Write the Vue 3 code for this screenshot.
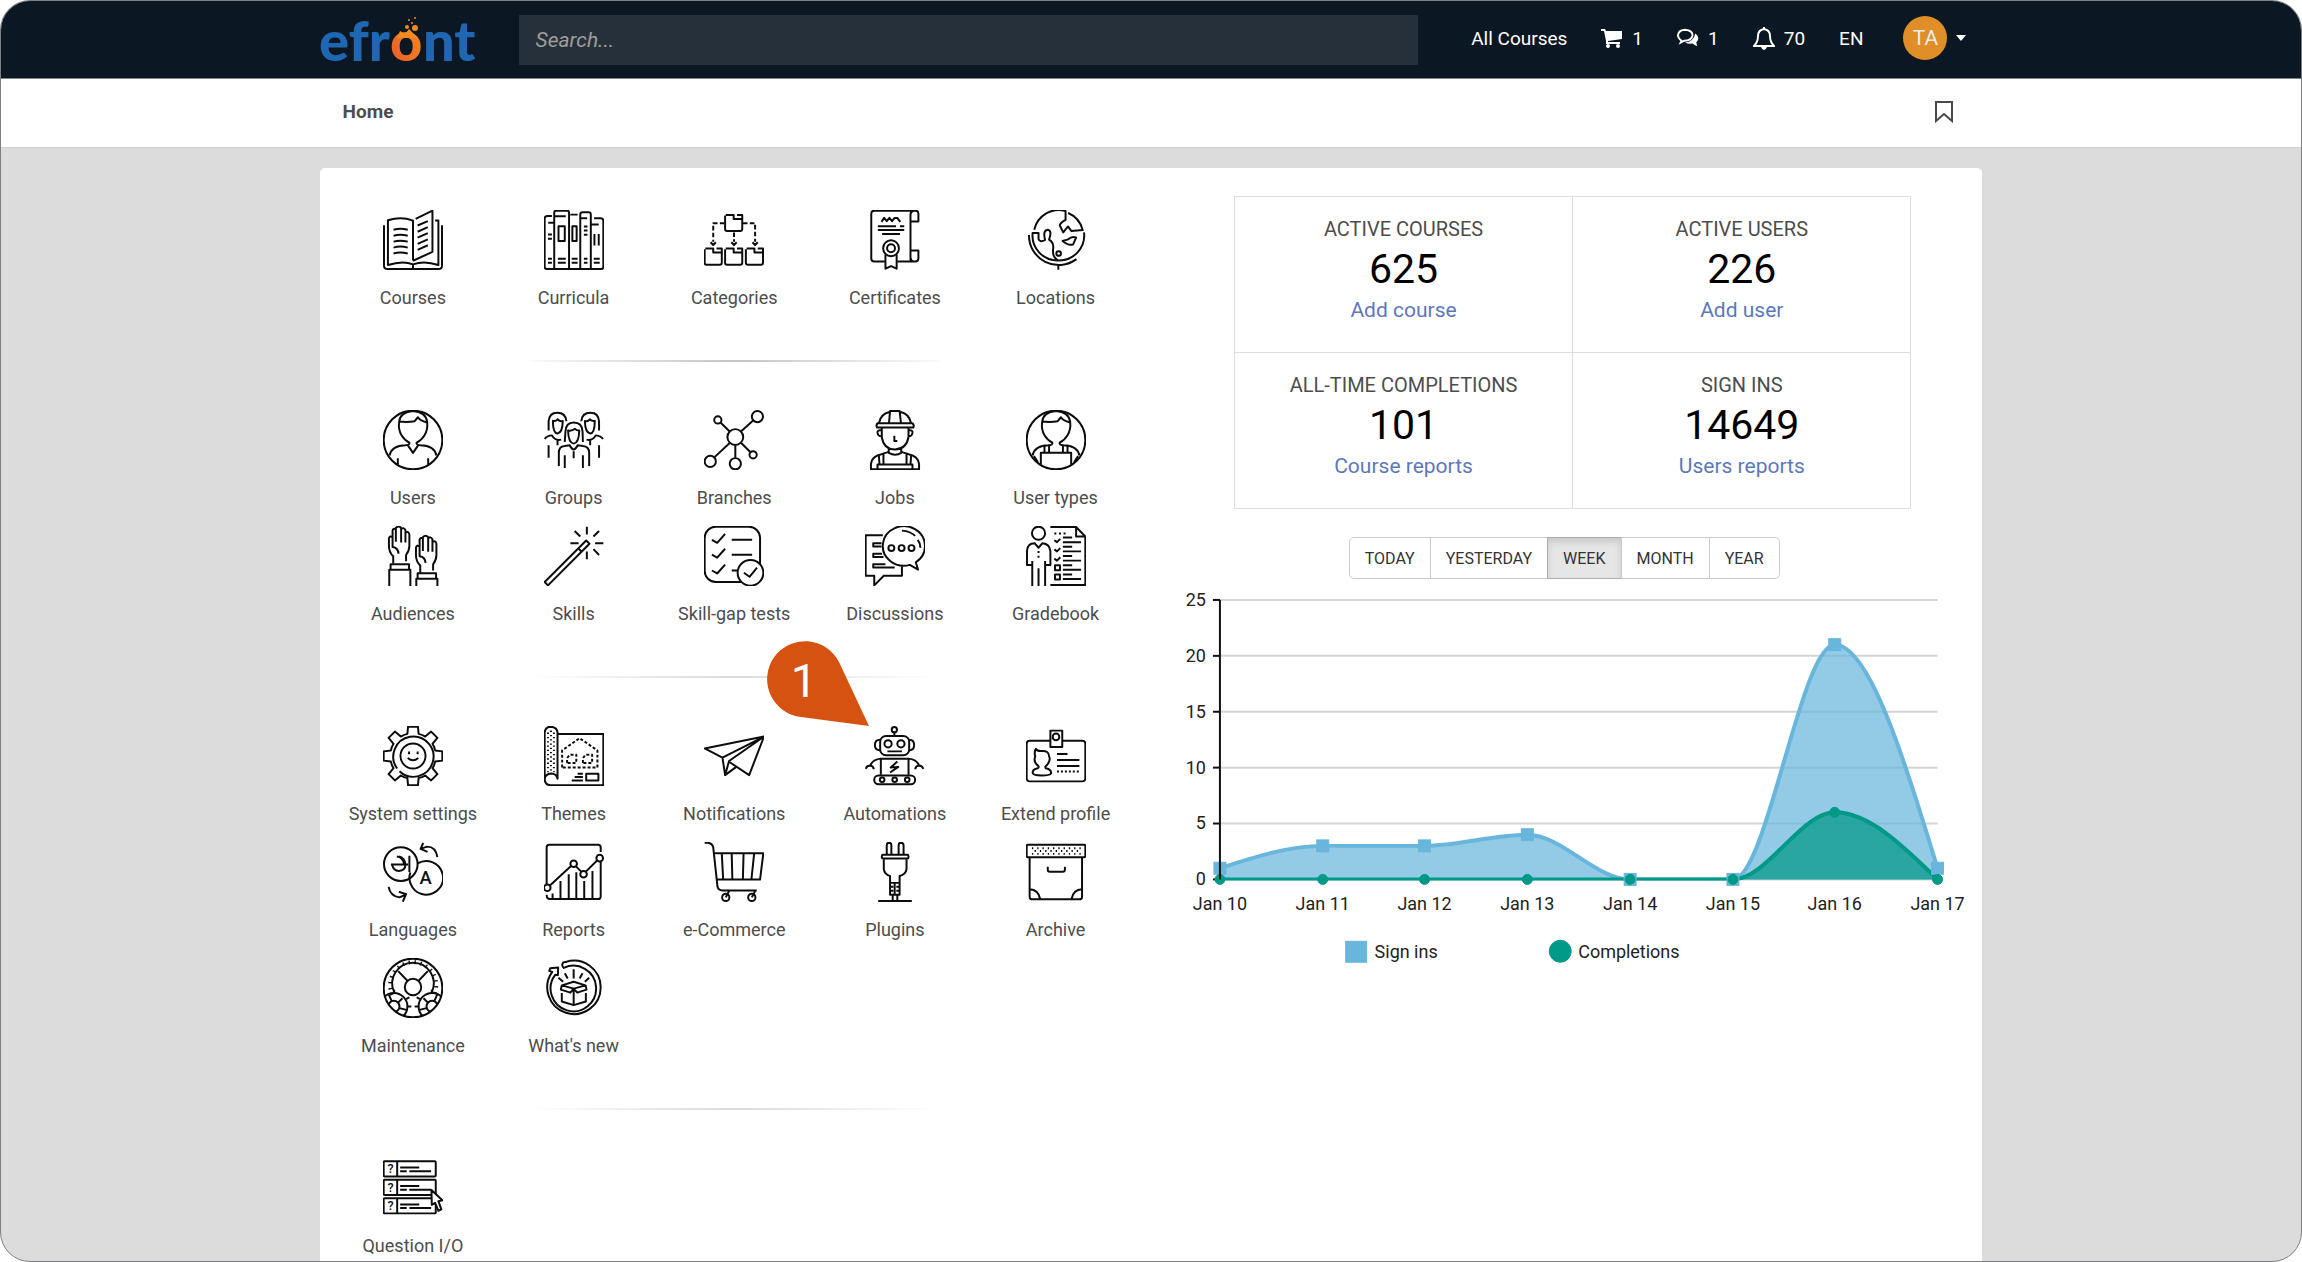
<template>
  <div class="page">
    <!-- Icon sprite -->
    <svg class="sprite" aria-hidden="true">
      <symbol id="courses" viewBox="0 0 182 182">
        <path d="M91 153V32Q55 18 15 31V167Q60 152 91 165Q125 152 168 167V32H158M3 46V168Q3 179 14 179H168Q179 179 179 168V46M91 165V179" />
        <path d="M99 27L150 2V127L91 154" />
        <path d="M32 60q20-6 43 0M32 78q20-6 43 0M32 96q20-6 43 0M32 114q20-6 43 0M32 132q20-6 43 0M105 47l31-13M105 66l31-14M105 84l31-14M105 103l31-14M105 121l31-14" />
      </symbol>
      <symbol id="curricula" viewBox="0 0 182 182">
        <path d="M24 18H10Q2 18 2 26V172Q2 179 9 179H173Q180 179 180 172V33Q180 25 172 25H152M31 179V8Q31 2 37 2H70Q76 2 76 8V179M80 14H102M110 179V14Q110 7 117 7H135Q142 7 142 14V179M13 39H30M34 19H66M112 25H131M144 44H166" />
        <rect x="44" y="49" width="19" height="45" /><rect x="86" y="49" width="13" height="45" />
        <path d="M153 73V108M166 73V108M12 74H24M12 87H24M121 50H132M121 62H132M121 75H132M12 148H24M12 160H24M42 148H66M42 160H66M84 148H102M84 160H102M121 148H132M121 160H132M151 148H169M151 160H169" />
      </symbol>
      <symbol id="categories" viewBox="0 0 182 182">
        <path id="folder" d="M66 15H90V27H116V58Q116 64 110 64H70Q64 64 64 58V17M100 15H116V27" />
        <use href="#folder" x="-62" y="102" /><use href="#folder" y="102" /><use href="#folder" x="63" y="102" />
        <path stroke-dasharray="14 7" d="M62 40H28V96M118 40H155V96M91 68V96" />
        <path d="M20 98L28 106L36 98M83 98L91 106L99 98M147 98L155 106L163 98" />
      </symbol>
      <symbol id="certificates" viewBox="0 0 182 182">
        <path d="M60 156H28Q19 156 19 147V11Q19 2 28 2H154Q162 2 162 12V35H139M148 2Q138 4 138 14V156M98 156H152Q162 156 162 146V123H139M138 144Q139 155 148 156" />
        <path d="M50 36L58 24L66 34L74 24L82 34L90 24L98 24L107 36M39 49H94M106 49H119M39 61H119M52 73H106M62 136V178L79 170L96 178V136" />
        <circle cx="79" cy="116" r="24" /><circle cx="79" cy="116" r="12" />
      </symbol>
      <symbol id="locations" viewBox="0 0 182 182">
        <path d="M25 60A76 76 0 0 1 120 3V30Q98 42 104 50L113 68L127 50L138 64L172 61A76 76 0 0 0 128 9M176 68A76 76 0 0 1 98 153A76 76 0 0 1 20 70H38V88Q42 100 58 91Q50 62 66 60Q80 62 70 90Q86 100 82 120Q80 145 98 153M9 76A90 90 0 0 0 153 149M98 168V181" />
        <path d="M111 94L128 89Q140 78 152 84L143 104Q130 110 111 94Z" /><circle cx="99" cy="132" r="7" />
      </symbol>
      <symbol id="users" viewBox="0 0 182 182">
        <circle cx="91" cy="91" r="89" />
        <path id="head" d="M91 3Q52 6 49 36C44 70 64 92 80 99Q82 106 68 107Q26 108 20 138M91 3Q130 6 134 36C138 70 118 92 102 99Q100 106 114 107Q156 108 162 138M50 35Q75 38 96 34L106 22Q112 32 133 38" />
        <path d="M76 108L91 130L106 108M45 146V166M137 146V166" />
      </symbol>
      <symbol id="groups" viewBox="0 0 182 182">
        <g id="member">
          <path d="M14 62V34Q16 8 40 8Q66 8 68 34M27 33Q27 70 41 71Q56 70 57 33Q46 36 42 28Q35 35 27 33ZM2 88Q8 78 24 77Q34 95 52 90M41 93V107M14 107V145" />
        </g>
        <use href="#member" transform="translate(181) scale(-1 1)" />
        <path d="M63 97L65 66Q66 38 90 38Q116 38 117 66L118 97M73 62Q74 100 90 102Q106 100 107 62Q98 63 94 57Q84 65 73 62ZM45 170V130Q45 110 62 109L78 107Q90 132 102 107L118 109Q137 110 137 130V170M63 137V176M118 137V176M90 125V146" />
      </symbol>
      <symbol id="branches" viewBox="0 0 182 182">
        <circle cx="95" cy="82" r="24" /><circle cx="42" cy="30" r="11" /><circle cx="162" cy="20" r="17" />
        <circle cx="19" cy="156" r="17" /><circle cx="95" cy="163" r="17" /><circle cx="149" cy="136" r="11" />
        <path d="M50 38L78 65M112 65L149 32M78 100L32 143M95 107V145M113 100L141 128" />
      </symbol>
      <symbol id="jobs" viewBox="0 0 182 182">
        <path d="M38 40H144Q150 46 147 53H36Q33 45 38 40ZM43 38Q48 12 74 6M108 6Q134 12 139 38M73 38L76 3H105L109 38M51 55V82Q56 118 91 120Q126 118 132 82V55M50 62Q36 60 38 70Q40 80 50 80M132 62Q146 60 144 70Q142 80 132 80M89 78V94H98M72 118V130Q92 142 110 130V118" />
        <path d="M72 127L50 134Q20 140 18 164V180H164V164Q162 140 132 134L110 127M38 180V165H144V180M42 138L44 165M56 134V165M126 134V165M140 138L138 165" />
      </symbol>
      <symbol id="usertypes" viewBox="0 0 182 182">
        <circle cx="91" cy="91" r="89" /><use href="#head" />
        <path d="M45 166V130H137V166M56 108V130M70 108V130M112 108V130M126 108V130M24 140L36 158M158 140L146 158" />
      </symbol>
      <symbol id="audiences" viewBox="0 0 182 182">
        <path id="hand" d="M31 114V92Q18 80 18 60V38Q20 28 29 34V64Q46 66 47 84M29 36V14Q31 6 39 10V48M39 12V6Q47-3 55 6V50M55 10Q62 2 68 12V50M68 20Q78 14 80 26V60Q80 75 70 88V107" />
        <use href="#hand" x="82" y="28" />
        <path d="M19 182V133H83V182M23 133V116H79V133M101 182V160H165V182M105 160V143H161V160" />
      </symbol>
      <symbol id="skills" viewBox="0 0 182 182">
        <path d="M2 170L128 44L138 54L12 180ZM104 68L114 78M130 2V26M130 77V101M80 52H105M155 52H180M93 15L110 32M167 15L150 32M150 70L167 88" />
      </symbol>
      <symbol id="skillgap" viewBox="0 0 182 182">
        <rect x="2" y="2" width="168" height="168" rx="34" />
        <path d="M24 42L40 51L64 24M24 87L40 96L64 69M24 135L40 144L64 117M84 42H146M84 87H146M84 135H102" />
        <circle cx="141" cy="142" r="39" fill="#fff" /><path d="M121 142L138 154L161 126" />
      </symbol>
      <symbol id="discussions" viewBox="0 0 182 182">
        <path d="M54 28H2V151H28V180L57 151H112V122M50 52H25V62H50M52 84H25V94H56M62 116H25V126H90" />
        <path d="M136 118A64 60 0 1 1 154 110L161 132Z" />
        <circle cx="80" cy="67" r="9" /><circle cx="111" cy="67" r="9" /><circle cx="141" cy="67" r="9" />
        <path d="M112 14Q138 16 152 30M160 42Q168 52 168 66" />
      </symbol>
      <symbol id="gradebook" viewBox="0 0 182 182">
        <circle cx="38" cy="22" r="20" />
        <path d="M19 182V106M19 118H3V76Q4 52 26 52L38 66L50 52Q72 54 74 76V118H58M58 106V182M38 128V182M38 76V82M38 90V96M74 3H152L180 32V179H74M152 3V32H180" />
        <path stroke-dasharray="6 8" d="M86 23H122" />
        <path d="M112 35H140M112 49H167M112 63H140M112 77H167M112 91H140M112 105H167M112 119H140M112 133H167M112 147H140M112 161H167M86 43L94 49L104 39M86 71L94 77L104 67M86 99L94 105L104 95" />
        <rect x="88" y="119" width="15" height="15" /><rect x="88" y="147" width="15" height="15" />
      </symbol>
      <symbol id="settings" viewBox="0 0 182 182">
        <path d="M74 24L76 2H106L108 24Q120 27 128 32L146 17L165 36L150 54Q156 63 158 74L180 77V105L158 108Q156 119 150 128L165 146L146 165L128 150Q119 156 108 158L106 180H76L74 158Q63 156 54 150L36 165L17 146L32 128Q26 119 24 108L2 105V77L24 74Q26 63 32 54L17 36L36 17L54 32Q63 27 74 24Z" />
        <path d="M50 137A61 61 0 1 0 43 129" />
        <circle cx="91" cy="91" r="38" /><path d="M79 77V86M105 77V86M75 97Q91 111 107 97" />
      </symbol>
      <symbol id="themes" viewBox="0 0 182 182">
        <path d="M42 24H180V180H20Q2 178 2 160V20Q4 2 21 2Q40 4 41 20V160Q38 144 21 144Q4 146 2 160" />
        <path stroke-dasharray="4 9" d="M12 20V140M30 20V140M21 14V140" />
        <path stroke-dasharray="9 6" d="M55 126V74L108 37L162 74V126ZM70 112V98L78 87H98V112ZM118 112V98L126 87H146V112Z" />
        <path d="M102 145H118M93 155H118M84 165H118" /><rect x="128" y="145" width="37" height="20" />
      </symbol>
      <symbol id="notifications" viewBox="0 0 182 182">
        <path d="M56 96L2 68L182 32L137 149L78 110M182 32L56 96L64 149L76 106L182 32M64 149L98 124" />
      </symbol>
      <symbol id="automations" viewBox="0 0 182 182">
        <circle cx="89" cy="11" r="8" /><rect x="46" y="30" width="88" height="59" rx="18" />
        <circle cx="70" cy="54" r="11" /><circle cx="109" cy="54" r="11" />
        <path d="M89 20V30M46 42Q30 42 30 58Q30 74 46 74M134 42Q149 42 149 58Q149 74 134 74M68 77H112M48 148V99H132V148M48 99Q22 102 16 120M2 130Q6 120 15 120Q25 121 27 131M132 99Q158 102 164 120M177 130Q173 120 164 120Q154 121 152 131M98 108L78 126L101 124L76 141" />
        <rect x="28" y="150" width="124" height="27" rx="13" />
        <circle cx="52" cy="163" r="7" /><circle cx="90" cy="163" r="7" /><circle cx="128" cy="163" r="7" />
      </symbol>
      <symbol id="profile" viewBox="0 0 182 182">
        <rect x="2" y="45" width="178" height="123" rx="9" /><rect x="74" y="14" width="36" height="50" fill="#fff" />
        <circle cx="91" cy="33" r="10" />
        <path d="M30 69Q34 77 46 76Q70 74 70 92Q76 104 64 118Q56 124 60 128Q78 132 76 144Q72 150 48 150Q20 150 20 142Q20 130 36 128Q42 124 34 118Q22 108 28 92Q24 80 30 69ZM94 85H126M94 103H162M94 121H162" />
        <path stroke-dasharray="6 6" d="M94 138H164" />
      </symbol>
      <symbol id="languages" viewBox="0 0 182 182">
        <circle cx="54" cy="67" r="51" /><path d="M105 65A51 51 0 1 1 83 92" />
        <path d="M24 68H76M28 70Q32 88 48 88Q68 86 68 68Q66 48 48 44M42 44Q60 46 64 66M80 42V91" />
        <path d="M165 46Q160 14 134 14L116 20M122 3L114 21L135 30M17 136Q22 164 50 168L68 160M48 151L70 158L60 181" />
      </symbol>
      <symbol id="reports" viewBox="0 0 182 182">
        <path d="M8 128V16Q8 8 16 8H164Q172 8 172 16V30M172 60V165Q172 173 164 173H18Q8 173 8 160M18 132L82 73M97 74L113 90M127 90L161 56M26 156V173M50 118V173M75 98V173M98 92V173M122 118V173M147 88V173" />
        <circle cx="10" cy="139" r="10" /><circle cx="90" cy="66" r="10" /><circle cx="120" cy="98" r="10" /><circle cx="169" cy="49" r="10" />
      </symbol>
      <symbol id="ecommerce" viewBox="0 0 182 182">
        <path d="M2 2H12Q25 4 28 16L41 136Q44 147 56 147H160M32 34H180L170 114H38M54 36L58 112M84 36L86 112M120 36L118 112M152 36L144 112M76 149L66 168M155 149L145 168" />
        <circle cx="66" cy="168" r="11" /><circle cx="145" cy="168" r="11" />
      </symbol>
      <symbol id="plugins" viewBox="0 0 182 182">
        <path d="M66 38V10Q66 2 73 2Q80 2 80 10V38M102 38V10Q102 2 109 2Q117 2 117 10V38M57 52V82Q59 98 76 103V160H105V103Q124 98 126 82V52M76 124H105M76 136H86M95 136H105M76 148H86M95 148H105M90 124V160M84 160V178M98 160V178M40 179H142" />
        <rect x="51" y="39" width="81" height="11" rx="4" />
      </symbol>
      <symbol id="archive" viewBox="0 0 182 182">
        <rect x="2" y="8" width="178" height="38" rx="4" />
        <path d="M11 46V166Q11 174 19 174H162Q170 174 170 166V46M66 75V84Q66 90 72 90H112Q118 90 118 84V75M11 143Q38 144 43 173M170 143Q143 144 138 173" />
        <path stroke-dasharray="4 12" d="M18 19H168M26 27H160M18 36H168" />
      </symbol>
      <symbol id="maintenance" viewBox="0 0 182 182">
        <clipPath id="dial"><circle cx="91" cy="91" r="89" /></clipPath>
        <circle cx="91" cy="91" r="89" /><circle cx="91" cy="88" r="25" />
        <path d="M34 104A63 63 0 1 1 148 104M74 69L46 40M108 69L136 40" />
        <path stroke-width="12" stroke-dasharray="4 14" d="M28 112A70 70 0 1 1 156 110" />
        <g clip-path="url(#dial)">
          <circle cx="33" cy="147" r="17" /><circle cx="33" cy="147" r="41" />
          <circle cx="149" cy="147" r="17" /><circle cx="149" cy="147" r="41" />
          <path d="M18 112L26 130M59 122L45 136M74 158L50 152M50 186L42 164M164 112L156 130M123 122L137 136M108 158L132 152M132 186L140 164M70 125L80 119M76 147H86M112 125L102 119M106 147H96M34 106V96M148 106V96" />
        </g>
      </symbol>
      <symbol id="whatsnew" viewBox="0 0 182 182">
        <path d="M56 17Q58 11 66 12A81 81 0 1 1 25 42L16 39L19 31L43 29L42 52L34 51A69 69 0 1 0 60 30Q54 26 56 17Z" />
        <path d="M54 106V132L90 143L127 132V106M90 93V143M90 72L54 83L90 93L126 83ZM54 83L51 96L80 105L90 93L101 105L129 96L126 83M90 34V62M63 46L72 62M117 46L108 62M44 60L58 72M137 60L124 72" />
      </symbol>
      <symbol id="questionio" viewBox="0 0 182 182">
        <g id="question">
          <rect x="2" y="10" width="158" height="46" rx="3" />
          <path d="M43 10V56M52 29H110M52 40H72M80 40H146" />
        </g>
        <use href="#question" y="56" /><use href="#question" y="112" />
        <path fill="#fff" d="M147 97L180 128L168 131L177 156L168 160L158 136L148 142Z" />
      </symbol>
    </svg>

    <header class="topbar">
      <div class="wrap topbar-inner">
        <a class="logo" href="#" aria-label="efront">
          <svg viewBox="0 0 157 50">
            <defs>
              <linearGradient id="flame" x1="0" y1="1" x2="1" y2="0">
                <stop offset="0" stop-color="#e8562a" /><stop offset="1" stop-color="#f7941e" />
              </linearGradient>
            </defs>
            <text class="logo-text" x="-1" y="46">efr</text>
            <text class="logo-text logo-flame" x="70" y="46">o</text>
            <text class="logo-text" x="103" y="46">nt</text>
            <path class="logo-spark" d="M77 23L80 16L85 19L89 14L93 18L97 23Z" />
            <circle class="logo-spark" cx="95" cy="13" r="3" /><circle class="logo-spark" cx="87" cy="12" r="2" />
            <circle class="logo-spark" cx="92" cy="8" r="1" /><circle class="logo-spark" cx="89" cy="5" r="1" />
            <circle class="logo-spark" cx="95" cy="3" r="1" />
          </svg>
        </a>
        <input class="search" type="text" placeholder="Search..." aria-label="Search" />
        <nav class="nav">
          <a href="#">All Courses</a>
          <a href="#" aria-label="Cart, 1 item">
            <svg class="nav-icon" viewBox="0 0 22 20">
              <path fill="currentColor" d="M0 1H4L5 3H21V11L7 13V14H19V16H5V13L3 3H0Z" />
              <circle cx="7" cy="18" r="2" fill="currentColor" /><circle cx="17" cy="18" r="2" fill="currentColor" />
            </svg>1
          </a>
          <a href="#" aria-label="Messages, 1 new">
            <svg class="nav-icon" viewBox="0 0 24 20">
              <path fill="currentColor" d="M20 5Q24 8 23 12Q22 14 21 15L22 19Q19 18 17 16Q12 17 9 15Q18 14 20 5Z" />
              <path fill="none" stroke="currentColor" stroke-width="2" d="M5 13Q1 10 1 7Q2 1 9 1Q17 2 17 7Q16 13 8 13L4 15Z" />
            </svg>1
          </a>
          <a href="#" aria-label="Notifications, 70 new">
            <svg class="nav-icon bell" viewBox="0 0 22 24">
              <path fill="none" stroke="currentColor" stroke-width="2" d="M11 1V3Q5 4 5 10Q5 16 1 20H21Q17 16 17 10Q17 4 11 3" />
              <path fill="currentColor" d="M8 21H14Q13 24 11 24Q9 24 8 21Z" />
            </svg>70
          </a>
          <a href="#">EN</a>
          <button class="account" type="button" aria-label="Account menu">
            <span class="avatar">TA</span>
            <span class="caret"></span>
          </button>
        </nav>
      </div>
    </header>

    <div class="crumbs">
      <div class="wrap crumbs-inner">
        <strong>Home</strong>
        <button class="bookmark" type="button" aria-label="Bookmark">
          <svg viewBox="0 0 18 22"><path d="M1 1H17V20L9 13L1 20Z" /></svg>
        </button>
      </div>
    </div>

    <main class="wrap card">
      <section class="menu">
        <template v-for="(group, g) in groups" :key="g">
          <hr v-if="g > 0" class="divider" />
          <div class="tiles">
            <a v-for="item in group" :key="item.icon" class="tile" href="#">
              <svg class="icon" viewBox="0 0 182 182">
                <use :href="'#' + item.icon" width="182" height="182" />
                <text
                  v-for="(glyph, n) in item.glyphs"
                  :key="n"
                  class="glyph"
                  :x="glyph.x"
                  :y="glyph.y"
                  :font-size="glyph.size"
                >{{ glyph.text }}</text>
              </svg>
              <span>{{ item.label }}</span>
              <svg v-if="item.step" class="callout" viewBox="0 0 102 85">
                <path d="M102 85L34 76A38 38 0 1 1 72 21Z" />
                <text x="37" y="56">{{ item.step }}</text>
              </svg>
            </a>
          </div>
        </template>
      </section>

      <section class="side">
        <div class="stats">
          <div v-for="stat in stats" :key="stat.title" class="stat">
            <div class="stat-title">{{ stat.title }}</div>
            <div class="stat-value">{{ stat.value }}</div>
            <a class="stat-link" href="#">{{ stat.link }}</a>
          </div>
        </div>

        <div class="chart-panel">
          <div class="periods">
            <button
              v-for="p in periods"
              :key="p"
              type="button"
              :class="{ active: p === period }"
              @click="period = p"
            >{{ p }}</button>
          </div>

          <svg class="chart" viewBox="0 0 771 390">
            <clipPath id="plot"><rect :x="left" y="0" width="720" :height="bottom + 1" /></clipPath>
            <g v-for="t in ticks" :key="t">
              <line class="grid" :x1="left" :x2="right" :y1="yAt(t)" :y2="yAt(t)" />
              <line class="axis" :x1="left - 7" :x2="left" :y1="yAt(t)" :y2="yAt(t)" />
              <text class="tick" :x="left - 14" :y="yAt(t) + 6">{{ t }}</text>
            </g>
            <g v-for="s in series" :key="s.name" :class="s.cls" clip-path="url(#plot)">
              <path class="area" :d="curve(s.values) + `V${bottom}H${left}Z`" />
              <path class="line" :d="curve(s.values)" />
            </g>
            <g class="signins">
              <rect v-for="(v, i) in signIns" :key="i" class="dot" :x="xAt(i) - 6" :y="yAt(v) - 6" width="12" height="12" />
            </g>
            <g class="completions">
              <circle v-for="(v, i) in completions" :key="i" class="dot" :cx="xAt(i)" :cy="yAt(v)" r="5" />
            </g>
            <line class="axis" :x1="left" :x2="left" :y1="top" :y2="bottom" />
            <text v-for="(d, i) in days" :key="d" class="day" :x="xAt(i)" :y="bottom + 31">{{ d }}</text>

            <g class="signins"><rect class="dot" x="166" y="363" width="21" height="21" /></g>
            <text class="legend" x="195" y="380">Sign ins</text>
            <g class="completions"><circle class="dot" cx="381" cy="373" r="11" /></g>
            <text class="legend" x="399" y="380">Completions</text>
          </svg>
        </div>
      </section>
    </main>
  </div>
</template>

<script setup>
import { ref } from 'vue';

const groups = [
  [
    { icon: 'courses', label: 'Courses' },
    { icon: 'curricula', label: 'Curricula' },
    { icon: 'categories', label: 'Categories' },
    { icon: 'certificates', label: 'Certificates' },
    { icon: 'locations', label: 'Locations' }
  ],
  [
    { icon: 'users', label: 'Users' },
    { icon: 'groups', label: 'Groups' },
    { icon: 'branches', label: 'Branches' },
    { icon: 'jobs', label: 'Jobs' },
    { icon: 'usertypes', label: 'User types' },
    { icon: 'audiences', label: 'Audiences' },
    { icon: 'skills', label: 'Skills' },
    { icon: 'skillgap', label: 'Skill-gap tests' },
    { icon: 'discussions', label: 'Discussions' },
    { icon: 'gradebook', label: 'Gradebook' }
  ],
  [
    { icon: 'settings', label: 'System settings' },
    { icon: 'themes', label: 'Themes' },
    { icon: 'notifications', label: 'Notifications' },
    { icon: 'automations', label: 'Automations', step: 1 },
    { icon: 'profile', label: 'Extend profile' },
    { icon: 'languages', label: 'Languages', glyphs: [{ text: 'A', x: 129, y: 127, size: 56 }] },
    { icon: 'reports', label: 'Reports' },
    { icon: 'ecommerce', label: 'e-Commerce' },
    { icon: 'plugins', label: 'Plugins' },
    { icon: 'archive', label: 'Archive' },
    { icon: 'maintenance', label: 'Maintenance' },
    { icon: 'whatsnew', label: "What's new" }
  ],
  [
    {
      icon: 'questionio',
      label: 'Question I/O',
      glyphs: [
        { text: '?', x: 23, y: 47, size: 38 },
        { text: '?', x: 23, y: 103, size: 38 },
        { text: '?', x: 23, y: 159, size: 38 }
      ]
    }
  ]
];

const stats = [
  { title: 'ACTIVE COURSES', value: 625, link: 'Add course' },
  { title: 'ACTIVE USERS', value: 226, link: 'Add user' },
  { title: 'ALL-TIME COMPLETIONS', value: 101, link: 'Course reports' },
  { title: 'SIGN INS', value: 14649, link: 'Users reports' }
];

const periods = ['TODAY', 'YESTERDAY', 'WEEK', 'MONTH', 'YEAR'];
const period = ref('WEEK');

// Chart
const left = 40;
const right = 759;
const top = 21;
const bottom = 301;
const ticks = [0, 5, 10, 15, 20, 25];
const days = ['Jan 10', 'Jan 11', 'Jan 12', 'Jan 13', 'Jan 14', 'Jan 15', 'Jan 16', 'Jan 17'];
const signIns = [1, 3, 3, 4, 0, 0, 21, 1];
const completions = [0, 0, 0, 0, 0, 0, 6, 0];
const series = [
  { name: 'Sign ins', cls: 'signins', values: signIns },
  { name: 'Completions', cls: 'completions', values: completions }
];

const xAt = (i) => Math.round(left + (i * (right - left)) / (days.length - 1));
const yAt = (v) => bottom - (v * (bottom - top)) / 25;

// Monotone cubic through the points, so the line never dips below zero
function curve(values) {
  const pts = values.map((v, i) => [xAt(i), yAt(v)]);
  const n = pts.length;
  const d = [];
  for (let i = 0; i < n - 1; i++) {
    d.push((pts[i + 1][1] - pts[i][1]) / (pts[i + 1][0] - pts[i][0]));
  }
  const m = new Array(n).fill(0);
  for (let i = 1; i < n - 1; i++) {
    if (d[i - 1] * d[i] > 0) {
      m[i] = Math.sign(d[i]) * Math.min(Math.abs(d[i - 1]), Math.abs(d[i]), Math.abs(d[i - 1] + d[i]) / 4) * 2;
    }
  }
  m[0] = (3 * d[0] - m[1]) / 2;
  m[n - 1] = (3 * d[n - 2] - m[n - 2]) / 2;
  let path = `M${pts[0][0]} ${pts[0][1]}`;
  for (let i = 0; i < n - 1; i++) {
    const h = (pts[i + 1][0] - pts[i][0]) / 3;
    path += `C${pts[i][0] + h} ${pts[i][1] + h * m[i]} ${pts[i + 1][0] - h} ${pts[i + 1][1] - h * m[i + 1]} ${pts[i + 1][0]} ${pts[i + 1][1]}`;
  }
  return path;
}
</script>

<style>
body {
  margin: 0;
  background: #fff;
}
</style>

<style scoped>
.page {
  display: flex;
  flex-direction: column;
  min-height: 100vh;
  box-sizing: border-box;
  border: 1px solid #7d7f82;
  border-radius: 30px;
  overflow: hidden;
  background: #dcdcdc;
  font-family: Roboto, "Liberation Sans", sans-serif;
  font-size: 18px;
  color: #4d4d4d;
}
a {
  color: inherit;
  text-decoration: none;
}
button {
  font: inherit;
  color: inherit;
  cursor: pointer;
}
.wrap {
  width: 72.3%;
  margin: 0 auto;
  box-sizing: border-box;
}
.sprite {
  position: absolute;
  width: 0;
  height: 0;
}

/* Top bar */
.topbar {
  background: #0b1722;
  border-bottom: 1px solid #7d858c;
}
.topbar-inner {
  display: flex;
  align-items: center;
  height: 77px;
  padding-right: 16px;
}
.logo {
  flex: none;
  width: 157px;
  margin-right: 42px;
}
.logo svg {
  display: block;
  width: 157px;
  height: 50px;
  overflow: visible;
}
.logo-text {
  font-family: Lato, sans-serif;
  font-weight: 900;
  font-size: 56px;
  fill: #1f67b2;
}
.logo-flame {
  fill: url(#flame);
}
.logo-spark {
  fill: #f58a20;
}
.search {
  flex: 1;
  min-width: 0;
  height: 50px;
  box-sizing: border-box;
  padding: 0 17px;
  border: 0;
  background: #26303b;
  color: #fff;
  font-family: inherit;
  font-size: 21px;
  font-style: italic;
}
.search::placeholder {
  color: #a09d9a;
  opacity: 1;
}
.nav {
  display: flex;
  align-items: center;
  gap: 34px;
  margin-left: 53px;
  padding-bottom: 3px;
  font-size: 19px;
  color: #fff;
  white-space: nowrap;
}
.nav a {
  display: flex;
  align-items: center;
  gap: 9px;
}
.nav-icon {
  width: 22px;
  height: 20px;
}
.bell {
  height: 24px;
}
.account {
  display: flex;
  align-items: center;
  gap: 9px;
  margin-left: 6px;
  padding: 0;
  border: 0;
  background: none;
}
.avatar {
  width: 44px;
  border-radius: 50%;
  background: #e08e28;
  color: #ececec;
  font-size: 21px;
  line-height: 44px;
  text-align: center;
}
.caret {
  border: 5px solid transparent;
  border-top: 6px solid #fff;
  border-bottom: 0;
}

/* Breadcrumb bar */
.crumbs {
  background: #fff;
  border-bottom: 1px solid #d0d0d0;
}
.crumbs-inner {
  display: flex;
  align-items: center;
  justify-content: space-between;
  height: 68px;
  padding: 0 29px 2px 23px;
  font-size: 19px;
}
.crumbs strong {
  font-weight: 700;
  line-height: 28px;
}
.bookmark {
  padding: 0;
  border: 0;
  background: none;
}
.bookmark svg {
  display: block;
  width: 18px;
  height: 22px;
  fill: none;
  stroke: #4a4a4a;
  stroke-width: 2;
}

/* Card */
.card {
  flex: 1;
  display: grid;
  grid-template-columns: 49.2fr 50.8fr;
  margin-top: 20px;
  padding: 0 17px 0 13px;
  border-radius: 5px 5px 0 0;
  background: #fff;
}
.menu {
  padding-top: 42px;
}
.tiles {
  display: grid;
  grid-template-columns: repeat(5, 1fr);
  row-gap: 18px;
}
.tile {
  position: relative;
  display: flex;
  flex-direction: column;
  align-items: center;
  height: 98px;
}
.tile span {
  margin-top: 17px;
  line-height: 21px;
  white-space: nowrap;
}
.icon {
  width: 60px;
  height: 60px;
  overflow: visible;
  fill: none;
  stroke: #0c0c0c;
  stroke-width: 6;
  stroke-linejoin: round;
}
.glyph {
  font-family: Roboto, sans-serif;
  font-weight: 500;
  text-anchor: middle;
  fill: #111;
  stroke: none;
}
.divider {
  width: 51%;
  height: 2px;
  margin: 52px auto 48px;
  border: 0;
  background: linear-gradient(to right, #fafafa, #c4c4c4, #fafafa);
}
.divider ~ .divider {
  background: linear-gradient(to right, #fff, #dadada, #fff);
}
.callout {
  position: absolute;
  right: calc(50% + 26px);
  bottom: 100%;
  width: 102px;
  height: 85px;
  fill: #d65210;
}
.callout text {
  font-size: 47px;
  text-anchor: middle;
  fill: #fff;
}

/* Statistics */
.side {
  padding: 28px 0 0 44px;
}
.stats {
  display: grid;
  grid-template-columns: 1fr 1fr;
  margin: 0 54px;
  border-top: 1px solid #dedede;
  border-left: 1px solid #dedede;
}
.stat {
  padding: 17px 0 26px;
  border-right: 1px solid #dedede;
  border-bottom: 1px solid #dedede;
  text-align: center;
}
.stat-title {
  font-size: 20px;
  line-height: 30px;
}
.stat-value {
  font-size: 41px;
  line-height: 50px;
  color: #000;
}
.stat-link {
  display: block;
  font-size: 21px;
  line-height: 32px;
  color: #5c78bd;
}

/* Chart */
.chart-panel {
  display: flex;
  flex-direction: column;
  align-items: center;
  margin-top: 28px;
  padding-right: 16px;
}
.periods {
  display: flex;
}
.periods button {
  height: 42px;
  margin-left: -1px;
  padding: 0 15px;
  border: 1px solid #ccc;
  background: #fff;
  color: #333;
  font-size: 16px;
}
.periods button:first-child {
  border-radius: 5px 0 0 5px;
}
.periods button:last-child {
  border-radius: 0 5px 5px 0;
}
.periods .active {
  border-color: #adadad;
  background: #e6e6e6;
  box-shadow: inset 0 4px 7px rgba(0, 0, 0, 0.13);
}
.chart {
  display: block;
  width: 100%;
  overflow: visible;
  font-size: 18px;
  fill: #222;
}
.grid {
  stroke: #d4d4d4;
  stroke-width: 2;
}
.axis {
  stroke: #111;
  stroke-width: 2;
}
.tick {
  text-anchor: end;
}
.day {
  text-anchor: middle;
}
.signins {
  fill: #69b6dc;
  stroke: #69b6dc;
}
.completions {
  fill: #009988;
  stroke: #009988;
}
.area {
  opacity: 0.72;
  stroke: none;
}
.line {
  fill: none;
  stroke-width: 4;
}
</style>
